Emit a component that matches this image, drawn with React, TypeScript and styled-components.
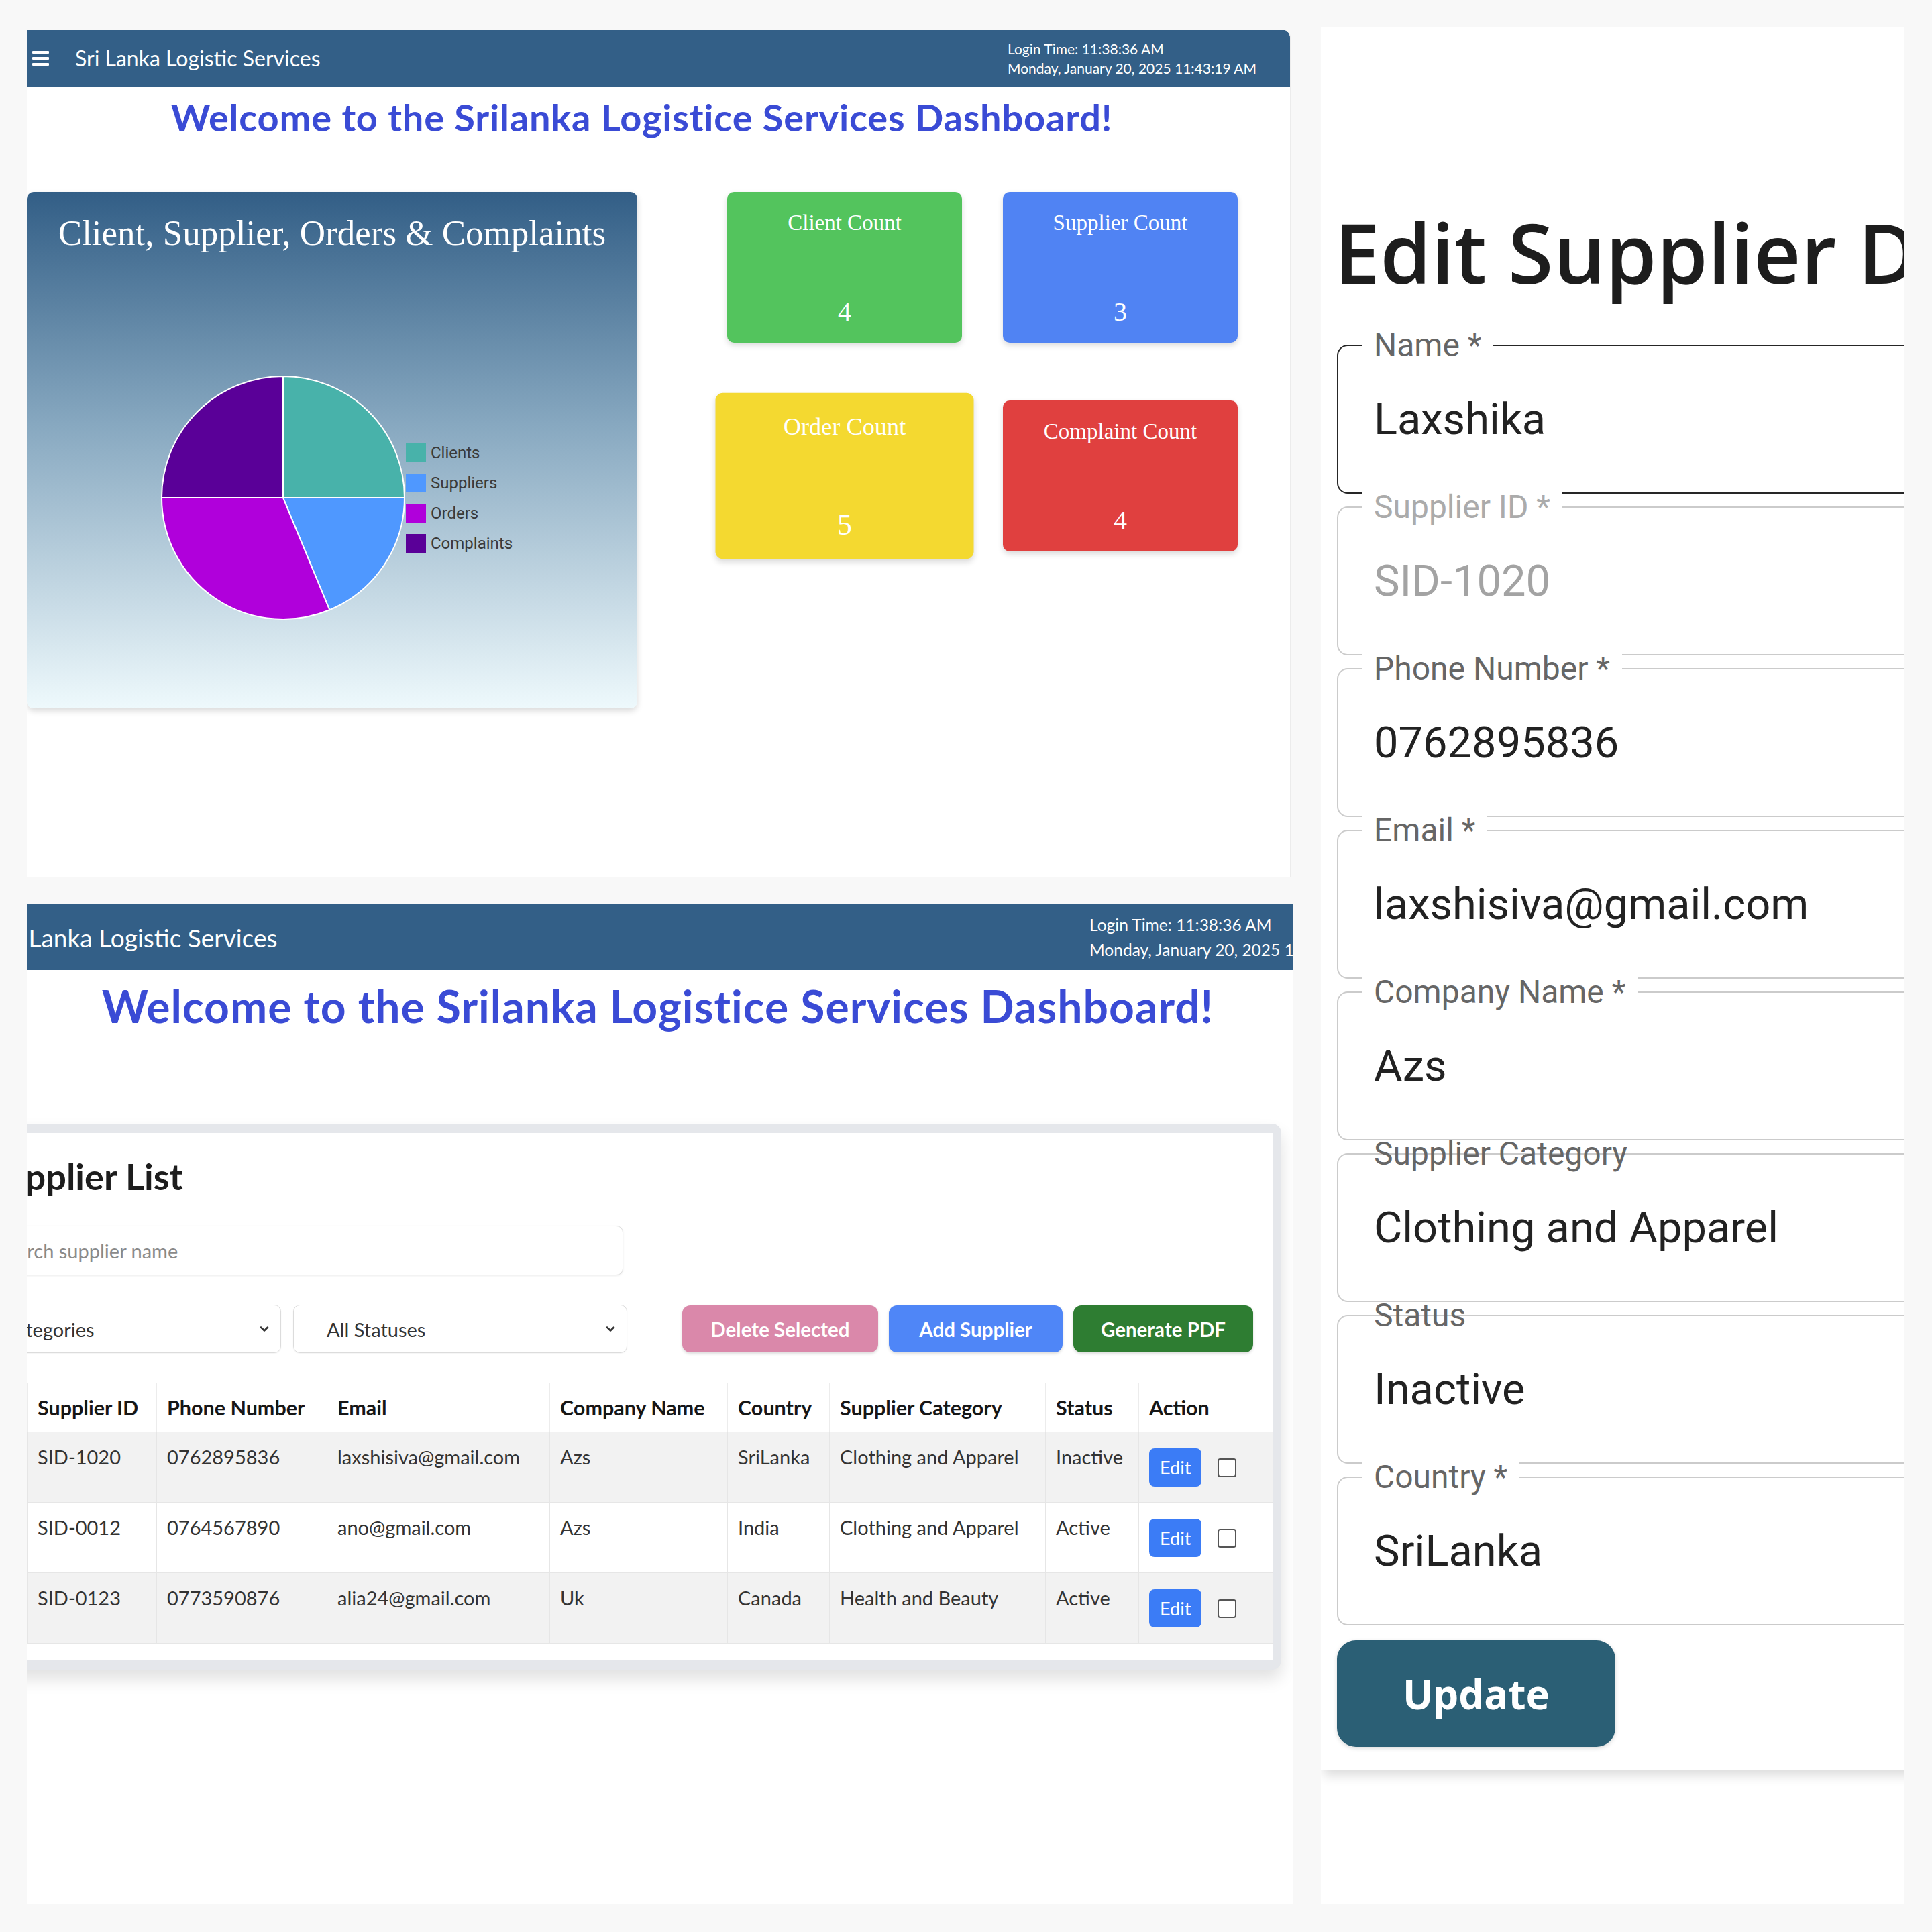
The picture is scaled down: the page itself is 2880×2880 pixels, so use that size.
import React from "react";
import styled, { createGlobalStyle } from "styled-components";
import { ChevronDown } from "lucide-react";

const GlobalStyle = createGlobalStyle`
  * { box-sizing: border-box; }
  html, body { margin: 0; padding: 0; background: #f8f8f8; }
  body { font-family: "Lato", "Liberation Sans", sans-serif; }
`;

const Page = styled.div`
  width: 2880px;
  height: 2880px;
  padding: 40px 42px 42px 40px;
  display: grid;
  grid-template-columns: 1887px 869px;
  column-gap: 42px;
  background: #f8f8f8;
`;

const LeftColumn = styled.div`
  display: flex;
  flex-direction: column;
  gap: 40px;
`;

/* ---------- Panel A : dashboard ---------- */
const PanelA = styled.section`
  margin-top: 4px;
  margin-right: 4px;
  height: 1264px;
  background: #fff;
  overflow: hidden;
  border-top-right-radius: 12px;
  box-shadow: 1px 0 0 #ececec;
`;

const TopBar = styled.header<{ $h: number }>`
  height: ${(p) => p.$h}px;
  background: #335f87;
  color: #fff;
  display: flex;
  align-items: center;
  white-space: nowrap;
`;

const TopBarA = styled(TopBar)`
  padding-left: 8px;
  border-top-right-radius: 12px;
`;

const Hamburger = styled.div`
  width: 25px;
  display: flex;
  flex-direction: column;
  gap: 5px;
  span {
    display: block;
    height: 4px;
    background: #fff;
    border-radius: 1px;
  }
`;

const BrandTitle = styled.div<{ $size: number; $w: number; $ml: number }>`
  flex: 0 0 ${(p) => p.$w}px;
  margin-left: ${(p) => p.$ml}px;
  font-size: ${(p) => p.$size}px;
`;

const LoginInfo = styled.div<{ $size: number; $lh: number }>`
  flex-shrink: 0;
  font-size: ${(p) => p.$size}px;
  line-height: ${(p) => p.$lh}px;
`;

const Welcome = styled.h1<{ $size: number; $lh: number; $mt: number; $pr: number; $ls: number }>`
  margin: ${(p) => p.$mt}px 0 0 0;
  padding-right: ${(p) => p.$pr}px;
  text-align: center;
  font-size: ${(p) => p.$size}px;
  line-height: ${(p) => p.$lh}px;
  letter-spacing: ${(p) => p.$ls}px;
  font-weight: 700;
  color: #3a4bd5;
  white-space: nowrap;
`;

const DashBody = styled.div`
  display: flex;
  align-items: flex-start;
  margin-top: 80px;
`;

const ChartCard = styled.div`
  width: 910px;
  height: 770px;
  border-radius: 10px;
  background: linear-gradient(180deg, #325e86 0%, #87a8c0 45%, #eef9fc 100%);
  box-shadow: 0 4px 10px rgba(0, 0, 0, 0.15);
  padding-top: 33px;
  text-align: center;
`;

const ChartTitle = styled.div`
  font-family: "Liberation Serif", "Times New Roman", serif;
  font-size: 53px;
  line-height: 56px;
  color: #fff;
  white-space: nowrap;
`;

const ChartRow = styled.div`
  display: flex;
  justify-content: center;
  align-items: center;
  margin-top: 185px;
  padding-left: 14px;
`;

const Legend = styled.ul`
  list-style: none;
  margin: 0 0 0 1px;
  padding: 0;
  display: flex;
  flex-direction: column;
  gap: 17px;
`;

const LegendItem = styled.li`
  display: flex;
  align-items: center;
  gap: 7px;
  font-family: "Roboto", "Liberation Sans", sans-serif;
  font-size: 24px;
  color: #3a3a3a;
`;

const Swatch = styled.span<{ $c: string }>`
  width: 30px;
  height: 28px;
  background: ${(p) => p.$c};
`;

const StatsGrid = styled.div`
  margin-left: 134px;
  display: grid;
  grid-template-columns: 350px 350px;
  column-gap: 61px;
  row-gap: 86px;
`;

const StatCard = styled.div<{ $bg: string; $raised?: boolean }>`
  height: 225px;
  border-radius: 10px;
  background: ${(p) => p.$bg};
  color: #fff;
  text-align: center;
  padding-top: 28px;
  font-family: "Liberation Serif", "Times New Roman", serif;
  box-shadow: 0 4px 8px rgba(0, 0, 0, 0.15);
  transform: ${(p) => (p.$raised ? "scale(1.1)" : "none")};
`;

const StatTitle = styled.div`
  font-size: 33px;
  line-height: 36px;
`;

const StatValue = styled.div`
  margin-top: 92px;
  font-size: 40px;
  line-height: 46px;
`;

/* ---------- Panel B : supplier list ---------- */
const PanelB = styled.section`
  height: 1490px;
  background: #fff;
  overflow: hidden;
`;

const ListCard = styled.div`
  margin: 139px 17px 0 -60px;
  border: 14px solid #e5e7eb;
  border-right-width: 13px;
  border-radius: 14px;
  box-shadow: 0 14px 24px rgba(0, 0, 0, 0.12);
  background: #fff;
  padding: 33px 0 25px 0;
`;

const ListHeading = styled.h2`
  margin: 0 0 0 -16px;
  font-size: 54px;
  line-height: 64px;
  font-weight: 700;
  color: #1d1d1d;
  white-space: nowrap;
`;

const SearchBox = styled.div`
  margin: 41px 0 0 -20px;
  width: 955px;
  height: 74px;
  border: 1px solid #dedede;
  border-radius: 10px;
  padding-left: 20px;
  display: flex;
  align-items: center;
  font-size: 29px;
  color: #8a8a8a;
  box-shadow: 0 1px 3px rgba(0, 0, 0, 0.08);
  white-space: nowrap;
`;

const ControlsRow = styled.div`
  display: flex;
  align-items: center;
  margin: 44px 0 0 -80px;
  padding-right: 29px;
`;

const SelectBox = styled.div<{ $w: number; $ml?: number }>`
  flex: 0 0 ${(p) => p.$w}px;
  margin-left: ${(p) => p.$ml || 0}px;
  height: 72px;
  border: 1px solid #dcdcdc;
  border-radius: 10px;
  padding: 0 14px 0 49px;
  display: flex;
  align-items: center;
  justify-content: space-between;
  font-size: 29px;
  color: #333;
  white-space: nowrap;
  box-shadow: 0 1px 2px rgba(0, 0, 0, 0.05);
`;

const ButtonGroup = styled.div`
  margin-left: auto;
  display: flex;
  gap: 16px;
`;

const ActionButton = styled.button<{ $bg: string; $w: number }>`
  width: ${(p) => p.$w}px;
  height: 70px;
  border: none;
  border-radius: 12px;
  background: ${(p) => p.$bg};
  color: #fff;
  font-family: "Lato", "Liberation Sans", sans-serif;
  font-weight: 700;
  font-size: 29.5px;
  box-shadow: 0 2px 4px rgba(0, 0, 0, 0.15);
  white-space: nowrap;
`;

const Table = styled.table`
  margin: 44px 0 0 46px;
  width: calc(100% - 46px);
  border-collapse: collapse;
  table-layout: fixed;
`;

const Th = styled.th`
  height: 73px;
  text-align: left;
  padding: 0 15px;
  font-size: 30.5px;
  font-weight: 700;
  color: #161616;
  border: 1px solid #ececec;
  background: #fff;
  white-space: nowrap;
`;

const Tr = styled.tr<{ $striped: boolean }>`
  background: ${(p) => (p.$striped ? "#f2f2f2" : "#fff")};
`;

const Td = styled.td`
  height: 105px;
  vertical-align: top;
  padding: 16px 15px 0;
  line-height: 42px;
  font-size: 29px;
  color: #333;
  border: 1px solid #e6e6e6;
  white-space: nowrap;
`;

const ActionCell = styled.div`
  display: flex;
  align-items: center;
  margin-top: 8px;
`;

const EditButton = styled.button`
  height: 57px;
  padding: 0 16px;
  border: none;
  border-radius: 8px;
  background: #3b7cf6;
  color: #fff;
  font-family: "Lato", "Liberation Sans", sans-serif;
  font-size: 27px;
`;

const CheckBox = styled.span`
  width: 28px;
  height: 28px;
  margin-left: 24px;
  border: 2.5px solid #555;
  border-radius: 4px;
  background: #fff;
`;

/* ---------- Panel C : edit form ---------- */
const PanelC = styled.section`
  height: 2798px;
  background: #fff;
  overflow: hidden;
  padding-top: 224px;
`;

const FormCard = styled.div`
  width: calc(100% + 60px);
  background: #fff;
  box-shadow: 0 12px 16px -4px rgba(0, 0, 0, 0.14);
  padding: 36px 0 35px 24px;
`;

const EditHeading = styled.h1`
  margin: 0 0 0 -4px;
  font-family: "Open Sans", "Liberation Sans", sans-serif;
  font-weight: 600;
  font-size: 122.5px;
  line-height: 151px;
  color: #1d1d1d;
  white-space: nowrap;
`;

const Field = styled.div<{ $first?: boolean; $active?: boolean }>`
  position: relative;
  margin-top: ${(p) => (p.$first ? 63 : 19)}px;
  width: 1000px;
  height: 222px;
  border: 2px solid ${(p) => (p.$active ? "#262626" : "#cbcbcb")};
  border-radius: 16px;
  display: flex;
  align-items: center;
  padding-left: 53px;
  font-family: "Roboto", "Liberation Sans", sans-serif;
`;

const FieldLabel = styled.span<{ $notch: boolean; $muted?: boolean }>`
  position: absolute;
  top: -25px;
  left: 35px;
  padding: 0 18px;
  line-height: 48px;
  font-size: 48px;
  background: ${(p) => (p.$notch ? "#fff" : "transparent")};
  color: ${(p) => (p.$muted ? "#ababab" : "#666")};
  white-space: nowrap;
`;

const FieldValue = styled.span<{ $muted?: boolean }>`
  font-size: 65px;
  color: ${(p) => (p.$muted ? "#a3a3a3" : "#222")};
  white-space: nowrap;
`;

const UpdateButton = styled.button`
  margin-top: 22px;
  width: 415px;
  height: 159px;
  border: none;
  border-radius: 28px;
  background: #2b5f75;
  color: #fff;
  font-family: "Open Sans", "Liberation Sans", sans-serif;
  font-weight: 700;
  font-size: 60px;
  box-shadow: 0 2px 6px rgba(0, 0, 0, 0.15);
`;

/* ---------- data ---------- */
const slices = [
  { label: "Clients", value: 4, color: "#48b2aa" },
  { label: "Suppliers", value: 3, color: "#4f98ff" },
  { label: "Orders", value: 5, color: "#b000db" },
  { label: "Complaints", value: 4, color: "#5a0098" },
];

const suppliers = [
  { id: "SID-1020", phone: "0762895836", email: "laxshisiva@gmail.com", company: "Azs", country: "SriLanka", category: "Clothing and Apparel", status: "Inactive" },
  { id: "SID-0012", phone: "0764567890", email: "ano@gmail.com", company: "Azs", country: "India", category: "Clothing and Apparel", status: "Active" },
  { id: "SID-0123", phone: "0773590876", email: "alia24@gmail.com", company: "Uk", country: "Canada", category: "Health and Beauty", status: "Active" },
];

const columns = [
  { title: "Supplier ID", w: 193 },
  { title: "Phone Number", w: 254 },
  { title: "Email", w: 332 },
  { title: "Company Name", w: 265 },
  { title: "Country", w: 152 },
  { title: "Supplier Category", w: 322 },
  { title: "Status", w: 139 },
  { title: "Action", w: 200 },
];

const fields = [
  { label: "Name *", value: "Laxshika", notch: true, active: true },
  { label: "Supplier ID *", value: "SID-1020", notch: true, muted: true },
  { label: "Phone Number *", value: "0762895836", notch: true },
  { label: "Email *", value: "laxshisiva@gmail.com", notch: true },
  { label: "Company Name *", value: "Azs", notch: true },
  { label: "Supplier Category", value: "Clothing and Apparel", notch: false },
  { label: "Status", value: "Inactive", notch: false },
  { label: "Country *", value: "SriLanka", notch: true },
];

function PieChart() {
  const r = 181;
  const c = 182;
  const total = slices.reduce((s, x) => s + x.value, 0);
  let angle = 0;
  const pt = (a: number) => {
    const rad = (a - 90) * (Math.PI / 180);
    return [c + r * Math.cos(rad), c + r * Math.sin(rad)];
  };
  return (
    <svg width="364" height="364" viewBox="0 0 364 364">
      {slices.map((s) => {
        const start = angle;
        const sweep = (s.value / total) * 360;
        angle += sweep;
        const [x1, y1] = pt(start);
        const [x2, y2] = pt(start + sweep);
        const large = sweep > 180 ? 1 : 0;
        return (
          <path
            key={s.label}
            d={`M ${c} ${c} L ${x1} ${y1} A ${r} ${r} 0 ${large} 1 ${x2} ${y2} Z`}
            fill={s.color}
            stroke="#ffffff"
            strokeWidth="2"
          />
        );
      })}
    </svg>
  );
}

export default function App() {
  return (
    <>
      <GlobalStyle />
      <Page>
        <LeftColumn>
          <PanelA>
            <TopBarA $h={85}>
              <Hamburger>
                <span />
                <span />
                <span />
              </Hamburger>
              <BrandTitle $size={32} $w={1390} $ml={39}>
                Sri Lanka Logistic Services
              </BrandTitle>
              <LoginInfo $size={21} $lh={29}>
                <div>Login Time: 11:38:36 AM</div>
                <div>Monday, January 20, 2025 11:43:19 AM</div>
              </LoginInfo>
            </TopBarA>
            <Welcome $size={56} $lh={62} $mt={15} $pr={50} $ls={0.8}>
              Welcome to the Srilanka Logistice Services Dashboard!
            </Welcome>
            <DashBody>
              <ChartCard>
                <ChartTitle>Client, Supplier, Orders &amp; Complaints</ChartTitle>
                <ChartRow>
                  <PieChart />
                  <Legend>
                    {slices.map((s) => (
                      <LegendItem key={s.label}>
                        <Swatch $c={s.color} />
                        {s.label}
                      </LegendItem>
                    ))}
                  </Legend>
                </ChartRow>
              </ChartCard>
              <StatsGrid>
                <StatCard $bg="#53c45d">
                  <StatTitle>Client Count</StatTitle>
                  <StatValue>4</StatValue>
                </StatCard>
                <StatCard $bg="#5083f3">
                  <StatTitle>Supplier Count</StatTitle>
                  <StatValue>3</StatValue>
                </StatCard>
                <StatCard $bg="#f4d930" $raised>
                  <StatTitle>Order Count</StatTitle>
                  <StatValue>5</StatValue>
                </StatCard>
                <StatCard $bg="#e0403f">
                  <StatTitle>Complaint Count</StatTitle>
                  <StatValue>4</StatValue>
                </StatCard>
              </StatsGrid>
            </DashBody>
          </PanelA>

          <PanelB>
            <TopBar $h={98}>
              <BrandTitle $size={37} $w={1633} $ml={-49}>
                Sri Lanka Logistic Services
              </BrandTitle>
              <LoginInfo $size={24.5} $lh={37}>
                <div>Login Time: 11:38:36 AM</div>
                <div>Monday, January 20, 2025 11:43:19 AM</div>
              </LoginInfo>
            </TopBar>
            <Welcome $size={66} $lh={72} $mt={18} $pr={6} $ls={1}>
              Welcome to the Srilanka Logistice Services Dashboard!
            </Welcome>
            <ListCard>
              <ListHeading>Supplier List</ListHeading>
              <SearchBox>Search supplier name</SearchBox>
              <ControlsRow>
                <SelectBox $w={505}>
                  All Categories
                  <ChevronDown size={20} strokeWidth={3} color="#333" />
                </SelectBox>
                <SelectBox $w={498} $ml={18}>
                  All Statuses
                  <ChevronDown size={20} strokeWidth={3} color="#333" />
                </SelectBox>
                <ButtonGroup>
                  <ActionButton $bg="#da88aa" $w={292}>Delete Selected</ActionButton>
                  <ActionButton $bg="#4f86f7" $w={259}>Add Supplier</ActionButton>
                  <ActionButton $bg="#2e7d32" $w={268}>Generate PDF</ActionButton>
                </ButtonGroup>
              </ControlsRow>
              <Table>
                <colgroup>
                  {columns.map((c) => (
                    <col key={c.title} style={{ width: c.w }} />
                  ))}
                </colgroup>
                <thead>
                  <tr>
                    {columns.map((c) => (
                      <Th key={c.title}>{c.title}</Th>
                    ))}
                  </tr>
                </thead>
                <tbody>
                  {suppliers.map((s, i) => (
                    <Tr key={s.id} $striped={i % 2 === 0}>
                      <Td>{s.id}</Td>
                      <Td>{s.phone}</Td>
                      <Td>{s.email}</Td>
                      <Td>{s.company}</Td>
                      <Td>{s.country}</Td>
                      <Td>{s.category}</Td>
                      <Td>{s.status}</Td>
                      <Td>
                        <ActionCell>
                          <EditButton>Edit</EditButton>
                          <CheckBox />
                        </ActionCell>
                      </Td>
                    </Tr>
                  ))}
                </tbody>
              </Table>
            </ListCard>
          </PanelB>
        </LeftColumn>

        <PanelC>
          <FormCard>
            <EditHeading>Edit Supplier Details</EditHeading>
            {fields.map((f, i) => (
              <Field key={f.label} $first={i === 0} $active={f.active}>
                <FieldLabel $notch={f.notch} $muted={f.muted}>
                  {f.label}
                </FieldLabel>
                <FieldValue $muted={f.muted}>{f.value}</FieldValue>
              </Field>
            ))}
            <UpdateButton>Update</UpdateButton>
          </FormCard>
        </PanelC>
      </Page>
    </>
  );
}
